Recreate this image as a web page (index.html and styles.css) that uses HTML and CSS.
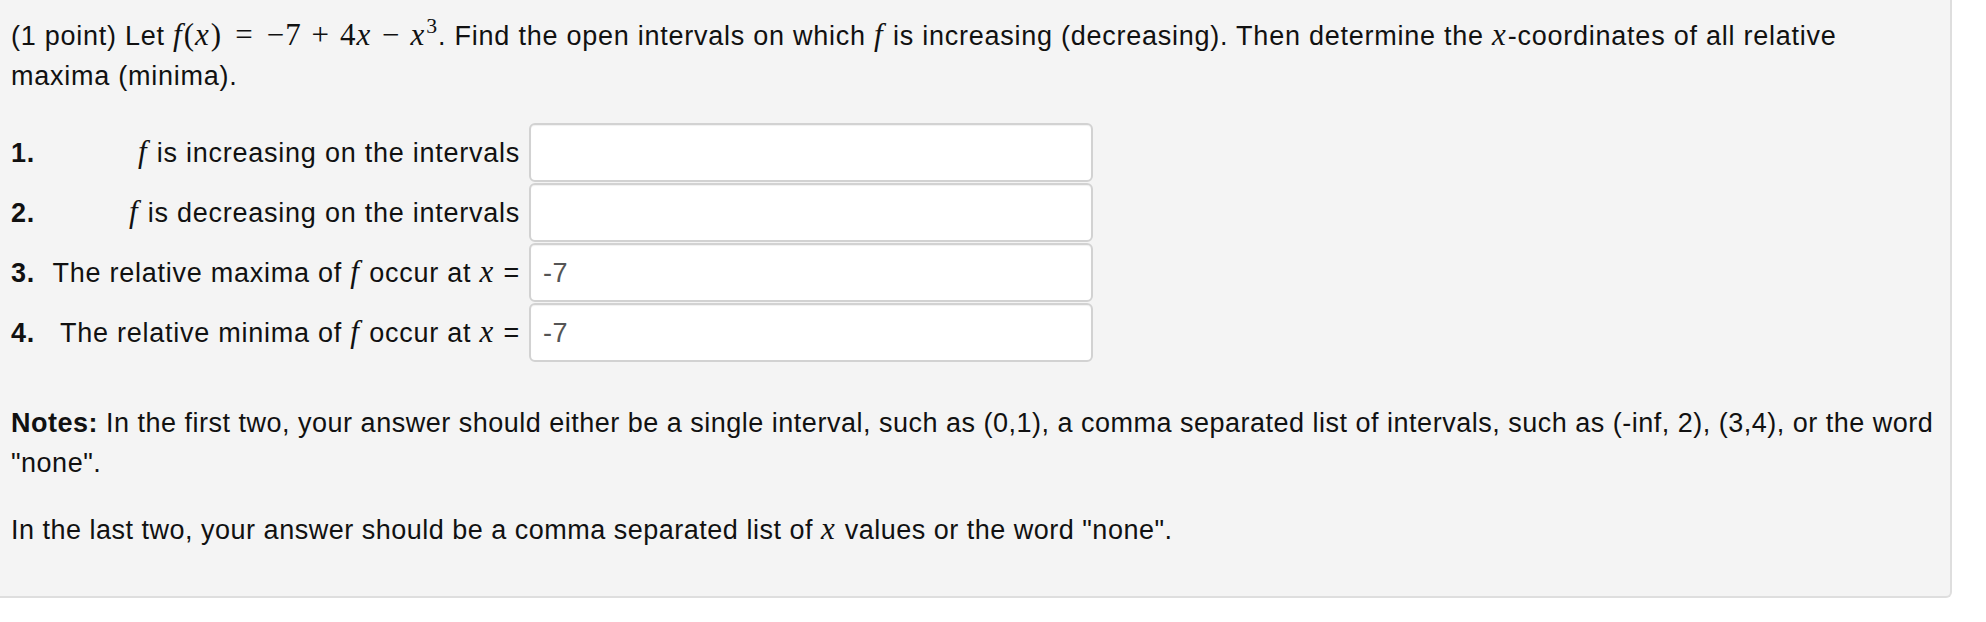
FILE: index.html
```html
<!DOCTYPE html>
<html lang="en">
<head>
<meta charset="utf-8">
<title>Problem</title>
<link rel="stylesheet" href="styles.css">
</head>
<body>
<div class="problem">
  <p class="para intro">(1 point) Let <span class="math"><i>f</i>(<i>x</i>)<span class="op eq">=</span>−7<span class="op">+</span>4<i>x</i><span class="op">−</span><i>x</i><sup>3</sup></span>. Find the open intervals on which <span class="math"><i>f</i></span> is increasing (decreasing). Then determine the <span class="math"><i>x</i></span>-coordinates of all relative maxima (minima).</p>

  <div class="answers">
    <div class="row">
      <div class="label"><b class="num">1.</b><span class="ltext"><span class="math"><i>f</i></span> is increasing on the intervals</span></div>
      <div class="input"></div>
    </div>
    <div class="row">
      <div class="label"><b class="num">2.</b><span class="ltext"><span class="math"><i>f</i></span> is decreasing on the intervals</span></div>
      <div class="input"></div>
    </div>
    <div class="row">
      <div class="label"><b class="num">3.</b><span class="ltext">The relative maxima of <span class="math"><i>f</i></span> occur at <span class="math"><i>x</i></span> =</span></div>
      <div class="input">-7</div>
    </div>
    <div class="row">
      <div class="label"><b class="num">4.</b><span class="ltext">The relative minima of <span class="math"><i>f</i></span> occur at <span class="math"><i>x</i></span> =</span></div>
      <div class="input">-7</div>
    </div>
  </div>

  <p class="para notes"><b>Notes:</b> In the first two, your answer should either be a single interval, such as (0,1), a comma separated list of intervals, such as (-inf, 2), (3,4), or the word "none".</p>
  <p class="para last">In the last two, your answer should be a comma separated list of <span class="math"><i>x</i></span> values or the word "none".</p>
</div>
</body>
</html>
```

FILE: styles.css
```css
html, body {
  margin: 0;
  padding: 0;
  background: #ffffff;
}

body {
  font-family: "Liberation Sans", Arial, Helvetica, sans-serif;
  font-size: 27px;
  letter-spacing: 0.5px;
  line-height: 40px;
  color: #111111;
}

.problem {
  width: 1952px;
  background: #f4f4f4;
  border-right: 2px solid #dedede;
  border-bottom: 2px solid #dedede;
  border-bottom-right-radius: 6px;
  padding: 16px 0 46px 11px;
  box-sizing: border-box;
}

.para {
  margin: 0;
  padding-right: 14px;
}

.intro {
  margin-bottom: 27px;
  letter-spacing: 0.75px;
}

.math {
  font-family: "Liberation Serif", "Times New Roman", serif;
  font-size: 31px;
  line-height: 30px;
  letter-spacing: 1px;
}

.math i {
  font-style: italic;
  padding-right: 1px;
}

.math .op {
  padding: 0 0.32em;
}

.math .op.eq {
  padding: 0 0.42em;
}

.math sup {
  font-size: 0.7em;
  line-height: 0;
  vertical-align: 0.55em;
}

.answers {
  display: flex;
  flex-direction: column;
  gap: 1px;
}

.row {
  display: flex;
  align-items: center;
}

.label {
  width: 518px;
  display: flex;
  justify-content: space-between;
  align-items: center;
  padding-right: 9px;
  box-sizing: border-box;
  white-space: nowrap;
  letter-spacing: 0.75px;
}

.num {
  font-weight: bold;
}

.ltext {
  text-align: right;
}

.input {
  width: 564px;
  height: 59px;
  box-sizing: border-box;
  background: #ffffff;
  border: 2px solid #d2d2d2;
  border-radius: 6px;
  box-shadow: inset 0 1px 1px rgba(0, 0, 0, 0.06);
  padding: 0 12px;
  display: flex;
  align-items: center;
  color: #555555;
}

.notes {
  margin-top: 41px;
}

.last {
  margin-top: 27px;
}
```
